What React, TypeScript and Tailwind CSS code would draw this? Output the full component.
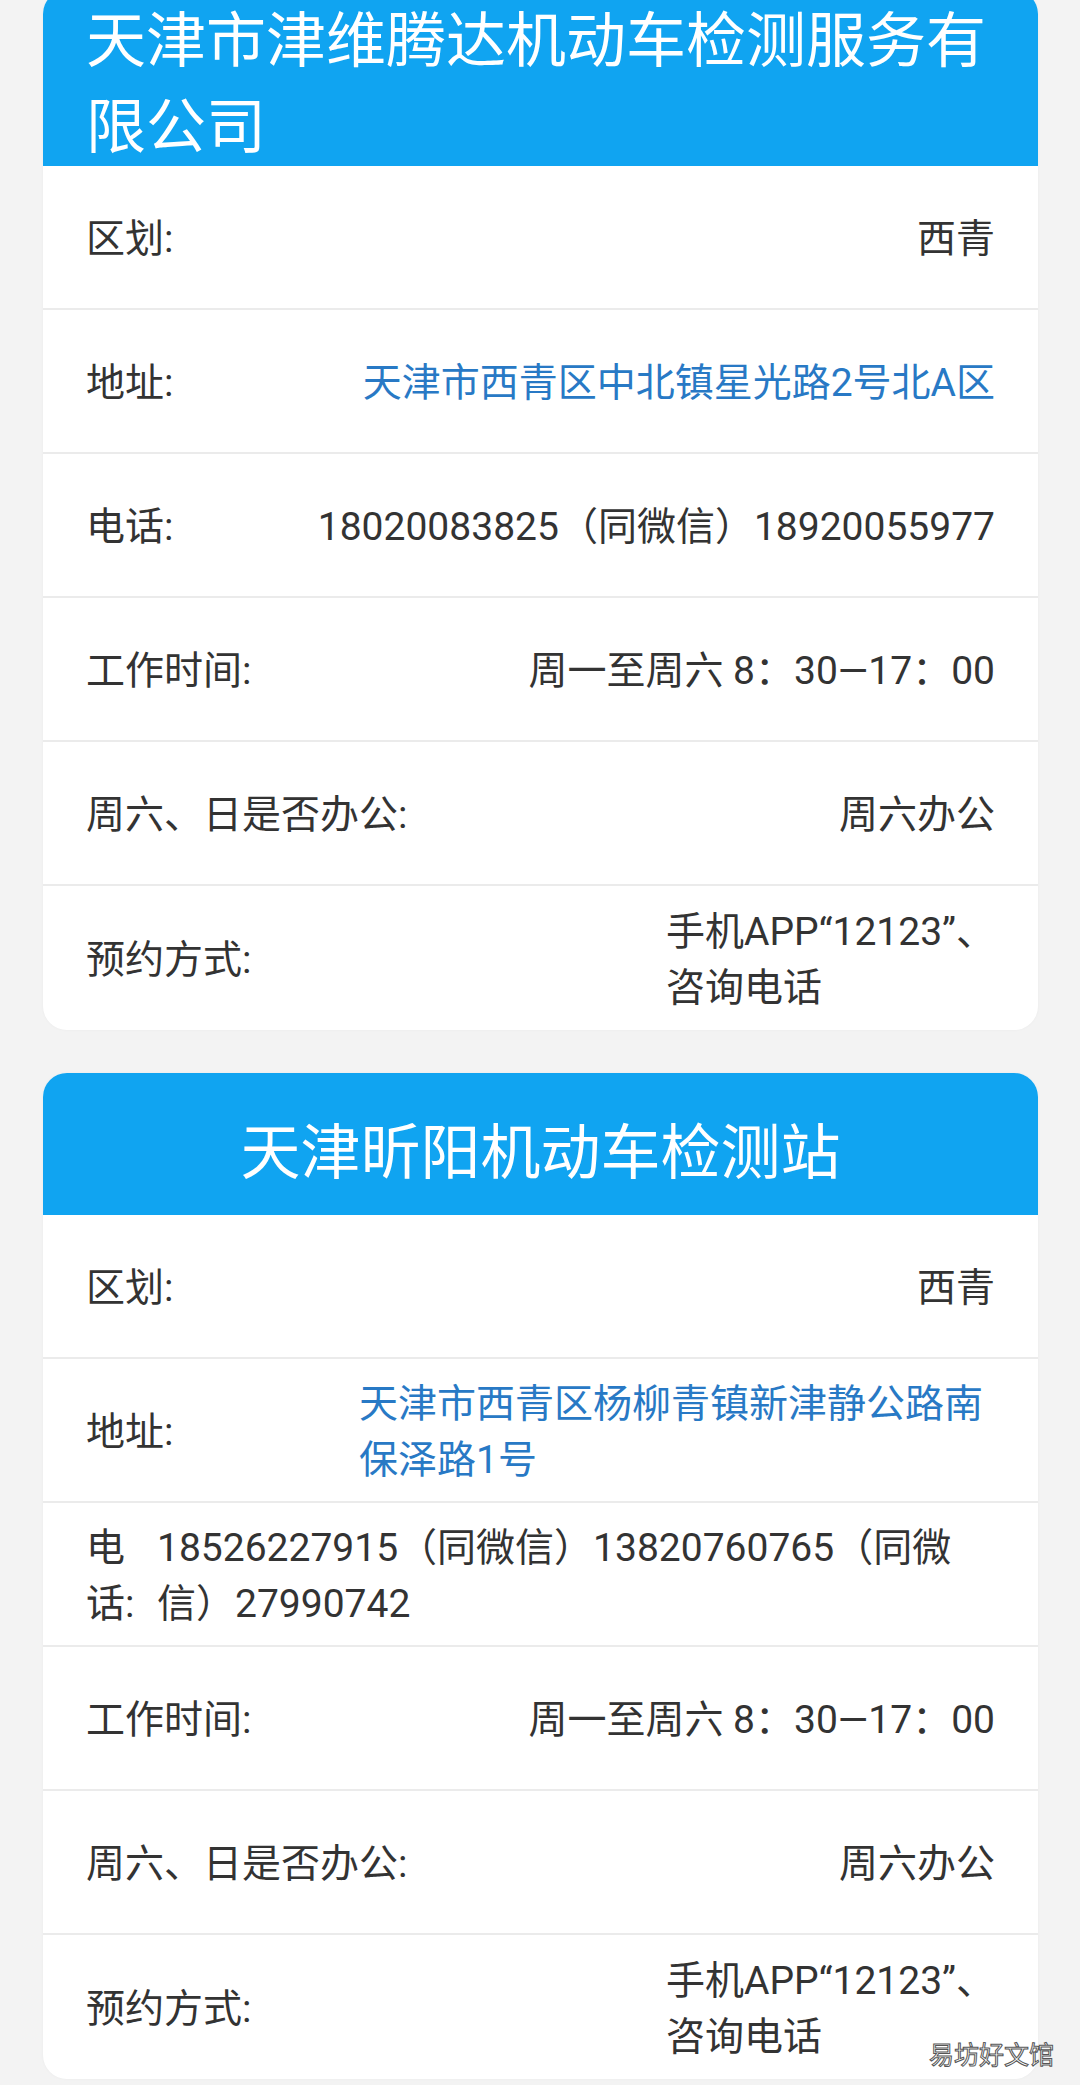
import type { ReactNode } from 'react';

type Row = {
  label: ReactNode;
  value: ReactNode;
  link?: boolean;
  labelClass?: string;
  valueClass?: string;
};

const stationA: Row[] = [
  { label: '区划:', value: '西青' },
  { label: '地址:', value: '天津市西青区中北镇星光路2号北A区', link: true },
  { label: '电话:', value: '18020083825（同微信）18920055977' },
  { label: '工作时间:', value: '周一至周六 8：30—17：00' },
  { label: '周六、日是否办公:', value: '周六办公' },
  {
    label: '预约方式:',
    value: (
      <>
        手机APP“12123”、
        <br />
        咨询电话
      </>
    ),
    valueClass: 'ml-auto text-left',
  },
];

const stationB: Row[] = [
  { label: '区划:', value: '西青' },
  {
    label: '地址:',
    value: (
      <>
        天津市西青区杨柳青镇新津静公路南
        <br />
        保泽路1号
      </>
    ),
    link: true,
    labelClass: 'w-[273px]',
    valueClass: 'flex-1 text-left',
  },
  {
    label: (
      <>
        电
        <br />
        话:
      </>
    ),
    value: (
      <>
        18526227915（同微信）13820760765（同微
        <br />
        信）27990742
      </>
    ),
    labelClass: 'w-[71px]',
    valueClass: 'flex-1 text-left',
  },
  { label: '工作时间:', value: '周一至周六 8：30—17：00' },
  { label: '周六、日是否办公:', value: '周六办公' },
  {
    label: '预约方式:',
    value: (
      <>
        手机APP“12123”、
        <br />
        咨询电话
      </>
    ),
    valueClass: 'ml-auto text-left',
  },
];

function InfoRow({ label, value, link, labelClass, valueClass }: Row) {
  return (
    <div className="flex items-center h-[144px] pt-[4px] px-[43px] border-b-2 border-[#ebebeb] last:border-b-0 text-[39px] leading-[56px] text-[#333333]">
      <div className={`shrink-0 ${labelClass ?? ''}`}>{label}</div>
      <div className={`${valueClass ?? 'ml-auto text-right'} ${link ? 'text-[#2879c5]' : ''}`}>{value}</div>
    </div>
  );
}

function StationCard({
  title,
  rows,
  headerClass,
  className,
}: {
  title: string;
  rows: Row[];
  headerClass: string;
  className?: string;
}) {
  return (
    <div className={`bg-white rounded-[24px] overflow-hidden shadow-[0_0_3px_rgba(0,0,0,0.04)] ${className ?? ''}`}>
      <div className={`bg-[#10a4f1] text-white text-[60px] leading-[86px] px-[43px] ${headerClass}`}>{title}</div>
      <div>
        {rows.map((r, i) => (
          <InfoRow key={i} {...r} />
        ))}
      </div>
    </div>
  );
}

export default function App() {
  return (
    <div className="relative min-h-screen bg-[#f3f3f3] pl-[43px] pr-[42px] pb-[6px] [font-family:Roboto,'Noto_Sans_CJK_SC',sans-serif]">
      <StationCard
        title="天津市津维腾达机动车检测服务有限公司"
        rows={stationA}
        headerClass="h-[176px] pt-[9px] text-left"
        className="-mt-[10px]"
      />
      <StationCard
        title="天津昕阳机动车检测站"
        rows={stationB}
        headerClass="h-[142px] pt-[38px] text-center"
        className="mt-[43px]"
      />
      {/* watermark */}
      <div className="absolute right-[26px] bottom-[18px] text-[25px] leading-[28px] text-white [-webkit-text-stroke:1px_#555] [font-family:'Noto_Sans_CJK_SC',sans-serif]">
        易坊好文馆
      </div>
    </div>
  );
}
